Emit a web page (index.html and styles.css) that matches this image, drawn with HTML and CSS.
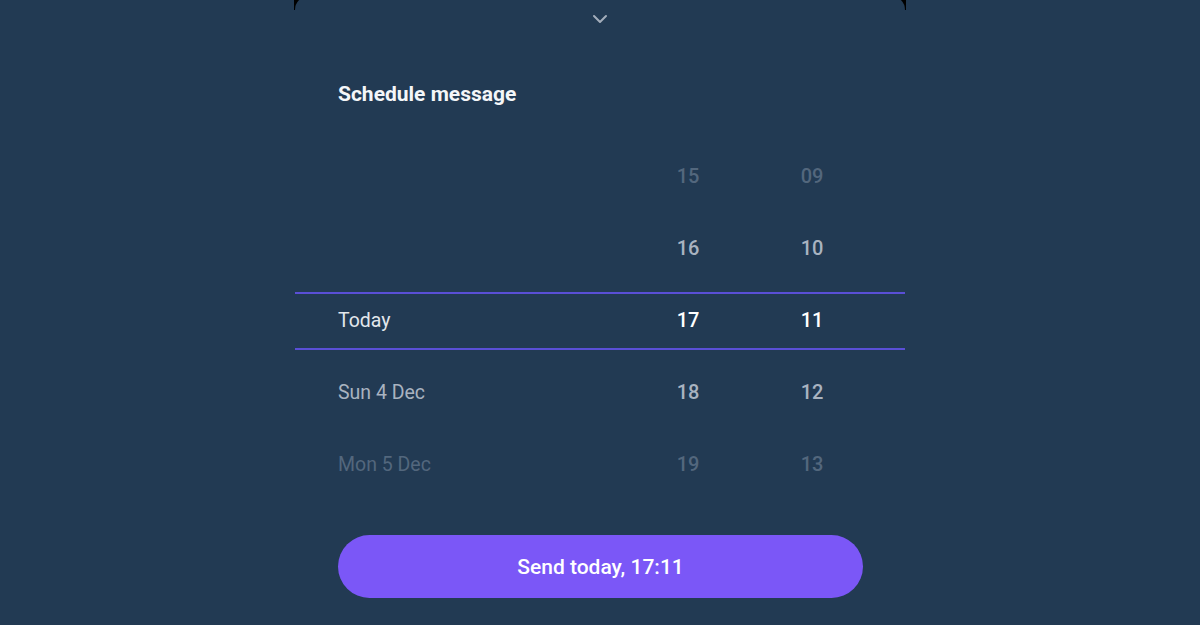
FILE: index.html
```html
<!DOCTYPE html>
<html>
<head>
<meta charset="utf-8">
<link rel="stylesheet" href="styles.css">
</head>
<body>
<div class="frame">
  <div class="panel">
    <div class="handle">
      <svg width="16" height="10" viewBox="0 0 16 10"><path d="M2 2 L8 8 L14 2" fill="none" stroke="#a3adbb" stroke-width="2" stroke-linecap="round" stroke-linejoin="round"/></svg>
    </div>
    <h1 class="title">Schedule message</h1>
    <div class="picker">
      <div class="row faint"><span class="date"></span><span class="num">15</span><span class="num">09</span></div>
      <div class="row mid"><span class="date"></span><span class="num">16</span><span class="num">10</span></div>
      <div class="row selected"><span class="date">Today</span><span class="num">17</span><span class="num">11</span></div>
      <div class="row mid"><span class="date">Sun 4 Dec</span><span class="num">18</span><span class="num">12</span></div>
      <div class="row faint"><span class="date">Mon 5 Dec</span><span class="num">19</span><span class="num">13</span></div>
    </div>
    <div class="actions">
      <button class="send">Send today, 17:11</button>
    </div>
  </div>
</div>
</body>
</html>
```

FILE: styles.css
```css
html, body {
  margin: 0;
  padding: 0;
  background: #223a53;
  height: 100%;
  overflow: hidden;
  font-family: Roboto, "Noto Sans", sans-serif;
}
.frame {
  width: 612px;
  margin: 0 auto;
  background: linear-gradient(#000, #000) 0 0 / 100% 10px no-repeat, #223a53;
  height: 100%;
  display: flex;
  justify-content: center;
}
.panel {
  width: 610px;
  margin-top: -4px;
  background: #223a53;
  border-radius: 14px 14px 0 0;
  display: flex;
  flex-direction: column;
}
.handle {
  height: 44px;
  display: flex;
  justify-content: center;
  align-items: center;
  padding-top: 2px;
  box-sizing: border-box;
}
.handle svg { display: block; }
.title {
  margin: 42px 0 0 43px;
  font-size: 21px;
  line-height: 24px;
  font-weight: 700;
  color: #f4f6f8;
}
.picker {
  margin-top: 34px;
  display: flex;
  flex-direction: column;
}
.row {
  height: 72px;
  display: grid;
  grid-template-columns: 1fr 102px 102px;
  column-gap: 22px;
  align-items: center;
  padding: 0 42px 0 43px;
  font-size: 19.5px;
}
.num {
  text-align: center;
  font-weight: 500;
  font-size: 20px;
}
.date { font-weight: 400; }
.faint { color: #53677d; }
.mid { color: #a9b3c0; }
.selected {
  color: #ffffff;
  background:
    linear-gradient(#5a4fd6, #5a4fd6) 0 8px / 100% 2px no-repeat,
    linear-gradient(#5a4fd6, #5a4fd6) 0 64px / 100% 2px no-repeat;
}
.selected .date { color: #e3e7ec; }
.actions {
  margin-top: 35px;
  padding: 0 42px 0 43px;
}
.send {
  width: 100%;
  height: 63px;
  border: none;
  border-radius: 32px;
  background: #7b57f7;
  color: #ffffff;
  font-family: Roboto, "Noto Sans", sans-serif;
  font-size: 21px;
  font-weight: 500;
}
```
